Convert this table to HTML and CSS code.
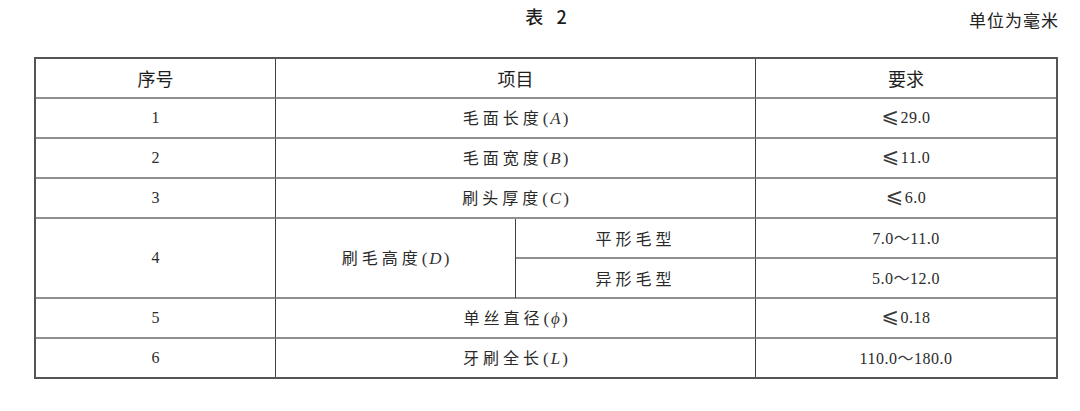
FILE: index.html
```html
<!DOCTYPE html>
<html lang="zh-CN">
<head>
<meta charset="utf-8">
<title>表 2</title>
<link rel="stylesheet" href="styles.css">
</head>
<body>
<div class="page">
  <div class="caption">
    <span class="spacer"></span>
    <h1 class="title">表 2</h1>
    <span class="unit">单位为毫米</span>
  </div>
  <table class="spec">
    <colgroup>
      <col class="c1"><col class="c2"><col class="c3"><col class="c4">
    </colgroup>
    <thead>
      <tr><th>序号</th><th colspan="2">项目</th><th>要求</th></tr>
    </thead>
    <tbody>
      <tr>
        <td class="num">1</td>
        <td colspan="2"><span class="zh">毛面长度</span><span class="sym">(<i>A</i>)</span></td>
        <td class="val"><span class="le">⩽</span>29.0</td>
      </tr>
      <tr>
        <td class="num">2</td>
        <td colspan="2"><span class="zh">毛面宽度</span><span class="sym">(<i>B</i>)</span></td>
        <td class="val"><span class="le">⩽</span>11.0</td>
      </tr>
      <tr>
        <td class="num">3</td>
        <td colspan="2"><span class="zh">刷头厚度</span><span class="sym">(<i>C</i>)</span></td>
        <td class="val"><span class="le">⩽</span>6.0</td>
      </tr>
      <tr>
        <td class="num" rowspan="2">4</td>
        <td rowspan="2"><span class="zh">刷毛高度</span><span class="sym">(<i>D</i>)</span></td>
        <td><span class="zh">平形毛型</span></td>
        <td class="val">7.0<span class="tilde">～</span>11.0</td>
      </tr>
      <tr>
        <td><span class="zh">异形毛型</span></td>
        <td class="val">5.0<span class="tilde">～</span>12.0</td>
      </tr>
      <tr>
        <td class="num">5</td>
        <td colspan="2"><span class="zh">单丝直径</span><span class="sym">(<i>ϕ</i>)</span></td>
        <td class="val"><span class="le">⩽</span>0.18</td>
      </tr>
      <tr class="last">
        <td class="num">6</td>
        <td colspan="2"><span class="zh">牙刷全长</span><span class="sym">(<i>L</i>)</span></td>
        <td class="val">110.0<span class="tilde">～</span>180.0</td>
      </tr>
    </tbody>
  </table>
</div>
</body>
</html>
```

FILE: styles.css
```css
html, body {
  margin: 0;
  padding: 0;
  background: #ffffff;
}

body {
  font-family: "Noto Sans CJK SC", "Noto Sans", sans-serif;
  color: #222222;
}

.page {
  width: 1024px;
  margin-left: 34px;
}

.caption {
  height: 57px;
  display: grid;
  grid-template-columns: 1fr auto 1fr;
  align-items: start;
}

.title {
  margin: 0;
  padding-top: 4px;
  font-size: 18px;
  line-height: 24px;
  font-weight: 500;
  color: #1e1e1e;
  word-spacing: 9px;
}

.unit {
  justify-self: end;
  padding-top: 8px;
  font-size: 17px;
  line-height: 24px;
  color: #222222;
  letter-spacing: 1px;
  margin-right: -1px;
}

.spec {
  width: 1024px;
  table-layout: fixed;
  border-collapse: separate;
  border-spacing: 0;
  border: 2px solid #555555;
}

.c1, .c2, .c3 { width: 240px; }
.c4 { width: 300px; }

.spec tr { height: 40px; }
.spec tr.last { height: 38px; }

.spec th,
.spec td {
  padding: 0;
  text-align: center;
  vertical-align: middle;
  border-right: 1px solid #404040;
  border-bottom: 2px solid #8f8f8f;
  box-sizing: border-box;
}

.spec th:last-child,
.spec td:last-child { border-right: none; }

.spec tr.last td { border-bottom: none; }
.spec td[rowspan] { border-bottom: 2px solid #8f8f8f; }

.spec th {
  font-size: 18px;
  font-weight: 400;
  color: #1e1e1e;
  line-height: 24px;
}

.spec td {
  font-size: 16px;
  line-height: 22px;
  color: #2a2a2a;
}

.zh {
  letter-spacing: 4px;
}

.sym {
  font-family: "Liberation Serif", "DejaVu Serif", serif;
  font-size: 17px;
  color: #333333;
}

.sym i {
  padding: 0 2px;
}

.num,
.val {
  font-family: "Liberation Serif", "DejaVu Serif", serif;
  font-size: 17px;
  color: #3a3a3a;
}

.val {
  letter-spacing: 0.5px;
}

.le {
  font-family: "DejaVu Sans", sans-serif;
  font-size: 21px;
  line-height: 18px;
  color: #3a3a3a;
  margin-right: 1px;
}

.tilde {
  font-family: "Noto Sans CJK SC", sans-serif;
  font-size: 16px;
  color: #3a3a3a;
}
```
